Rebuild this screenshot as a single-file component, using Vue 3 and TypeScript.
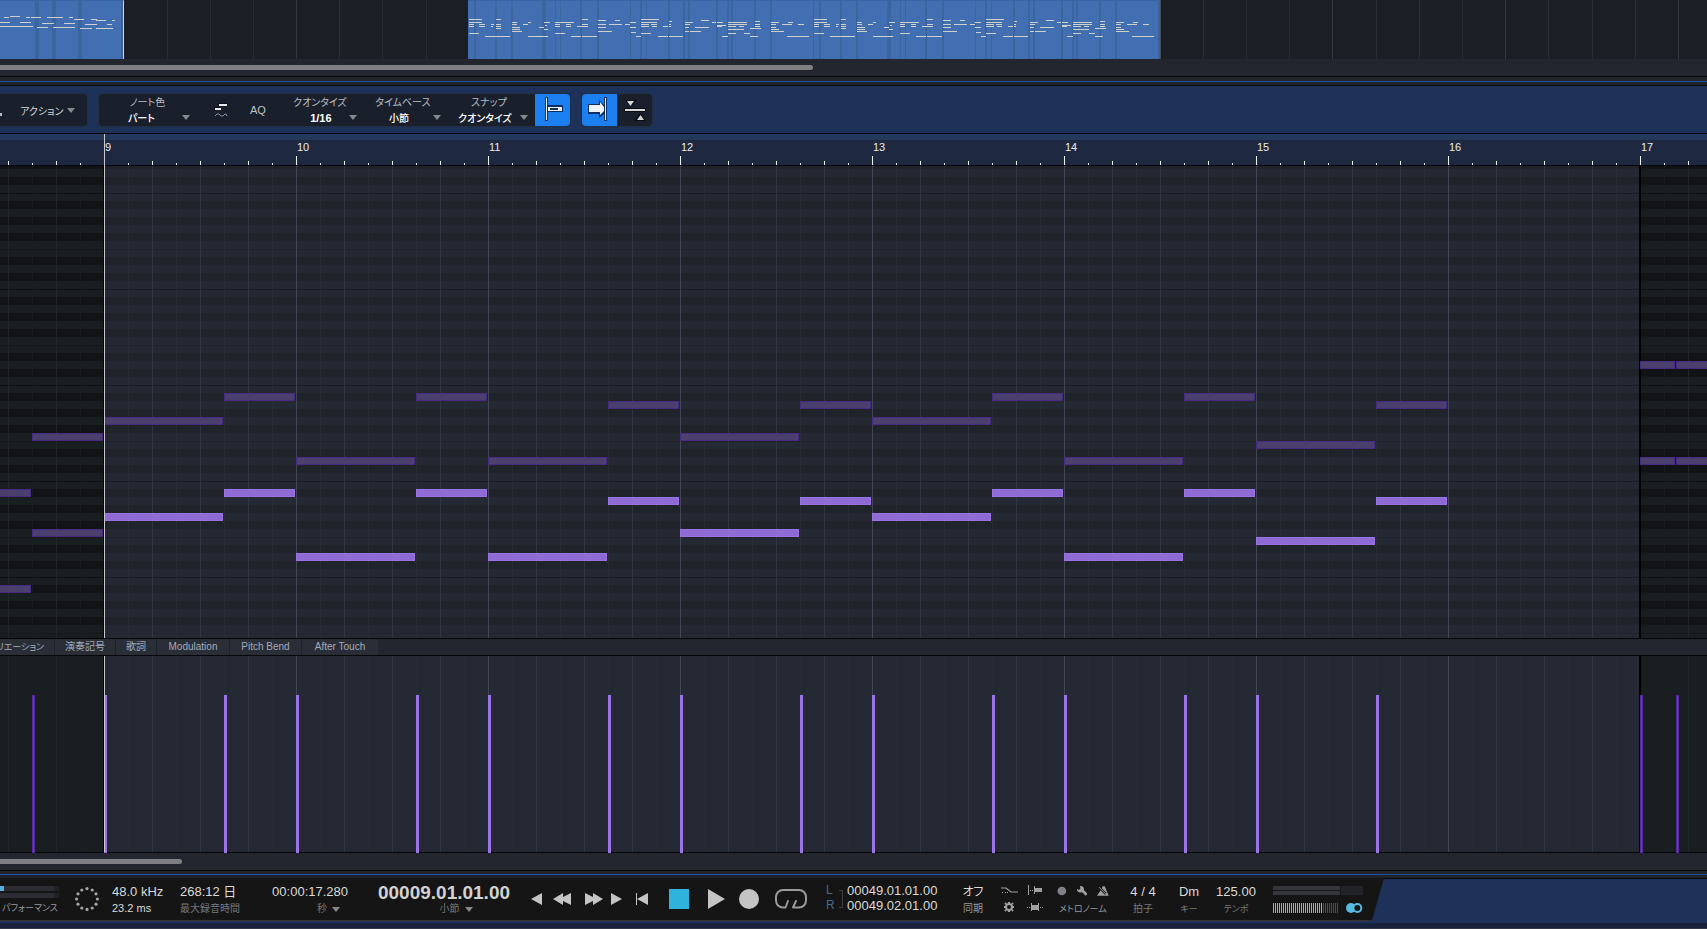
<script setup lang="ts">
import { ref } from 'vue'

interface Span { x: number; w: number; y: number }
interface Note extends Span { dim?: boolean }
interface Hit { x: number; dim?: boolean }

const ORIGIN = 104
const bars = [9, 10, 11, 12, 13, 14, 15, 16, 17]

const lead: Array<[number, number, number]> = [
  [0, 120, 347], [120, 72, 323],
  [192, 120, 387], [312, 72, 323],
  [384, 120, 387], [504, 72, 331],
  [576, 120, 363], [696, 72, 331],
  [768, 120, 347], [888, 72, 323],
  [960, 120, 387], [1080, 72, 323],
  [1152, 120, 371], [1272, 72, 331]
]

const notes: Note[] = [
  ...lead.map(([x, w, y]) => ({ x: ORIGIN + x, w: w - 1, y })),
  ...lead.map(([x, w, y]) => ({ x: ORIGIN + x, w: w - 1, y: y - 96, dim: true })),
  { x: -40, w: 71, y: 323, dim: true },
  { x: -40, w: 71, y: 419, dim: true },
  { x: 32, w: 71, y: 267, dim: true },
  { x: 32, w: 71, y: 363, dim: true },
  { x: 1640, w: 35, y: 195, dim: true },
  { x: 1676, w: 71, y: 195, dim: true },
  { x: 1640, w: 35, y: 291, dim: true },
  { x: 1676, w: 71, y: 291, dim: true }
]

const hits: Hit[] = [
  { x: 32, dim: true },
  ...lead.map(([x]) => ({ x: ORIGIN + x })),
  { x: 1640, dim: true },
  { x: 1676, dim: true }
]

const phrase: Array<[number, number, number]> = [
  [1, 13, 19], [1, 13, 22], [1, 5, 24], [11, 6, 24], [1, 5, 26], [11, 6, 26], [23, 3, 24], [23, 2, 26],
  [28, 5, 19], [28, 5, 24], [28, 5, 26], [28, 5, 28], [1, 10, 33], [17, 25, 36],
  [44, 5, 22], [44, 5, 24], [55, 5, 24], [60, 3, 22], [44, 8, 27], [44, 8, 29], [44, 10, 31], [71, 5, 27],
  [76, 6, 22], [77, 2, 25], [76, 4, 29], [60, 20, 36],
  [87, 19, 22], [87, 5, 24], [98, 5, 24], [87, 5, 26], [98, 5, 26], [87, 10, 33], [103, 10, 36], [114, 6, 19],
  [114, 6, 24], [109, 11, 26], [114, 15, 36],
  [130, 8, 20], [147, 5, 20], [130, 8, 24], [141, 13, 24], [157, 5, 24], [162, 6, 22], [162, 6, 27],
  [163, 5, 32], [130, 8, 27], [130, 14, 31], [168, 5, 36],
  [173, 18, 19], [173, 16, 22], [173, 8, 24], [183, 6, 24], [173, 8, 26], [184, 5, 26], [195, 5, 26],
  [201, 3, 21], [201, 2, 24], [201, 2, 26], [173, 10, 33], [190, 10, 36], [201, 14, 36],
  [217, 8, 22], [217, 5, 24], [233, 8, 20], [217, 4, 27], [227, 14, 27], [217, 4, 31], [222, 11, 31],
  [244, 4, 22], [249, 6, 22], [249, 9, 25], [249, 5, 26], [254, 6, 36],
  [260, 19, 22], [260, 19, 24], [260, 8, 26], [271, 5, 26], [260, 16, 29], [260, 8, 33], [276, 6, 33],
  [287, 5, 21], [287, 5, 24], [287, 5, 26], [282, 11, 28], [282, 8, 36],
  [303, 8, 22], [320, 5, 22], [303, 5, 24], [314, 10, 24], [330, 6, 24], [303, 5, 27], [303, 8, 29],
  [303, 13, 31], [319, 22, 36]
]
const phraseBands: Array<[number, number]> = [
  [6, 2], [27, 2], [43, 2], [74, 4], [87, 1], [92, 1], [112, 2], [129, 2], [162, 1], [172, 2], [178, 1],
  [200, 2], [215, 2], [220, 2], [248, 2], [259, 2], [263, 2], [286, 2], [302, 2], [345, 1]
]
const repeats = [0, 345]
const clipNotes: Span[] = repeats.flatMap(o =>
  phrase.filter(([x]) => x + o < 690).map(([x, w, y]) => ({ x: x + o, w, y })))
const clipBands = repeats.flatMap(o => phraseBands.map(([x, w]) => ({ x: x + o, w })))

const intro: Span[] = ([
  [4, 5, 17], [10, 10, 16], [26, 4, 17], [31, 10, 17], [47, 16, 17], [69, 4, 17], [74, 10, 19], [91, 6, 19],
  [96, 10, 20], [112, 3, 20], [0, 10, 22], [20, 11, 22], [42, 12, 23], [64, 11, 23], [85, 12, 24],
  [107, 5, 24], [0, 33, 26], [37, 11, 27], [53, 22, 27], [80, 12, 28], [96, 17, 28]
] as Array<[number, number, number]>).map(([x, w, y]) => ({ x, w, y }))
const introBands = [{ x: 35, w: 4 }, { x: 52, w: 4 }, { x: 78, w: 4 }]

const arrangeLines = Array.from({ length: 60 }, (_, i) => ({
  x: Math.round(123.4 + i * 43.18),
  strong: i % 4 === 0
}))

const lanes = ['バリエーション', '演奏記号', '歌詞', 'Modulation', 'Pitch Bend', 'After Touch']
const lane = ref(-1)

const ring = Array.from({ length: 12 }, (_, i) => ({
  x: 12 + 10.4 * Math.cos((i * Math.PI) / 6),
  y: 12 + 10.4 * Math.sin((i * Math.PI) / 6)
}))
const px = (n: number) => `${n}px`
</script>

<template>
  <main class="daw">
    <section class="arrange" aria-label="アレンジ">
      <i v-for="l in arrangeLines" :key="l.x" class="aline" :class="{ strong: l.strong }" :style="{ left: px(l.x) }" />
      <div class="clip intro">
        <i v-for="(b, i) in introBands" :key="'b' + i" class="band" :style="{ left: px(b.x), width: px(b.w) }" />
        <i v-for="(n, i) in intro" :key="i" class="mini" :style="{ left: px(n.x), width: px(n.w), top: px(n.y) }" />
      </div>
      <div class="clip body">
        <i v-for="(b, i) in clipBands" :key="'b' + i" class="band" :style="{ left: px(b.x), width: px(b.w) }" />
        <i v-for="(n, i) in clipNotes" :key="i" class="mini" :style="{ left: px(n.x), width: px(n.w), top: px(n.y) }" />
      </div>
    </section>
    <div class="scroll"><div class="thumb wide" /></div>
    <div class="splitter" />

    <header class="toolbar">
      <div class="group first">
        <i class="speck" />
        <button class="action" type="button">アクション<svg class="caret" viewBox="0 0 8 5"><path d="M0 0h8L4 5z" /></svg></button>
      </div>
      <div class="group main">
        <div class="combo color">
          <label for="c1">ノート色</label>
          <select id="c1"><option>パート</option></select>
          <svg class="caret" viewBox="0 0 8 5"><path d="M0 0h8L4 5z" /></svg>
        </div>
        <button class="tool glyph" type="button" aria-label="ヒューマナイズ">
          <svg width="14" height="18" viewBox="0 0 14 18">
            <path d="M4 2h9v3H4zM0 6h7v3H0z" fill="#0b0f16" />
            <path d="M5 3h8v2H5zM1 7h6v2H1z" fill="#e8eaec" />
            <path d="M1 15l2-2h2l2 2h2l2-2h1l1 2" fill="none" stroke="#8d9299" />
          </svg>
        </button>
        <button class="tool aq" type="button">AQ</button>
        <div class="combo quant">
          <label for="c2">クオンタイズ</label>
          <select id="c2"><option>1/16</option></select>
          <svg class="caret" viewBox="0 0 8 5"><path d="M0 0h8L4 5z" /></svg>
        </div>
        <div class="combo base">
          <label for="c3">タイムベース</label>
          <select id="c3"><option>小節</option></select>
          <svg class="caret" viewBox="0 0 8 5"><path d="M0 0h8L4 5z" /></svg>
        </div>
        <div class="combo snap">
          <label for="c4">スナップ</label>
          <select id="c4"><option>クオンタイズ</option></select>
          <svg class="caret" viewBox="0 0 8 5"><path d="M0 0h8L4 5z" /></svg>
        </div>
        <button class="toggle on" type="button" aria-label="スナップ切替" aria-pressed="true">
          <svg width="35" height="32" viewBox="0 0 35 32">
            <path d="M10 3h3v24h-3zM12 11h16v7H12z" fill="#0c2f66" />
            <path d="M11 4h1v22h-1zM13 13h14v4H13z" fill="#f0f2f4" />
            <path d="M15 14h8v2h-8z" fill="#12335f" />
          </svg>
        </button>
      </div>
      <div class="group last">
        <button class="toggle on" type="button" aria-label="自動スクロール" aria-pressed="true">
          <svg width="35" height="32" viewBox="0 0 35 32">
            <path d="M6 10h11V6l5 5V3h3v24h-3v-7l-5 4v-4H6z" fill="#0c2f66" />
            <path d="M7 11h11V8l4 5v4l-4 4v-3H7zM23 4h1v22h-1z" fill="#f0f2f4" />
          </svg>
        </button>
        <button class="toggle" type="button" aria-label="エディターを連動">
          <svg width="35" height="32" viewBox="0 0 35 32">
            <path d="M8 6h12l-6 7zM7 14h22v4H7zM17 27l6-8 6 8z" fill="#0a0e14" />
            <path d="M10 7h7l-3.500 5zM8 15h20v2H8zM20 26h7l-3.500-5z" fill="#d5d6d8" />
          </svg>
        </button>
      </div>
    </header>

    <section class="editor" aria-label="ピアノロール">
      <div class="ruler">
        <span v-for="b in bars" :key="b" class="barno">{{ b }}</span>
      </div>
      <div class="roll">
        <div class="zone before rows" />
        <div class="zone inside rows" />
        <div class="zone after rows" />
        <i v-for="(n, i) in notes" :key="i" class="note" :class="{ dim: n.dim }" :style="{ left: px(n.x), top: px(n.y), width: px(n.w) }" />
      </div>
      <nav class="lanes" role="tablist">
        <button v-for="(t, i) in lanes" :key="t" class="lane" :class="'l' + i" type="button" role="tab" :aria-selected="lane === i" @click="lane = i">{{ t }}</button>
      </nav>
      <div class="velocity">
        <div class="zone before" />
        <div class="zone inside" />
        <div class="zone after" />
        <i v-for="h in hits" :key="h.x" class="hit" :class="{ dim: h.dim }" :style="{ left: px(h.x) }" />
        <i class="playhead" />
      </div>
      <i class="playhead top" />
    </section>
    <div class="scroll"><div class="thumb short" /></div>
    <div class="splitter low" />

    <footer class="dock">
      <div class="transport">
        <div class="perf">
          <div class="meter"><i class="load" /></div>
          <div class="meter" />
          <span class="cap lite kana">パフォーマンス</span>
        </div>
        <svg class="ring" width="24" height="24" viewBox="0 0 24 24">
          <circle v-for="(d, i) in ring" :key="i" :cx="d.x" :cy="d.y" r="1.6" />
        </svg>
        <div class="col rate"><span class="val">48.0 kHz</span><span class="val small">23.2 ms</span></div>
        <div class="col room"><span class="val">268:12 日</span><span class="cap">最大録音時間</span></div>
        <div class="col secs">
          <span class="val">00:00:17.280</span>
          <span class="unit"><select aria-label="時間表示"><option>秒</option></select><svg class="caret" viewBox="0 0 8 5"><path d="M0 0h8L4 5z" /></svg></span>
        </div>
        <div class="col pos">
          <span class="big">00009.01.01.00</span>
          <span class="unit"><select class="two" aria-label="位置表示"><option>小節</option></select><svg class="caret" viewBox="0 0 8 5"><path d="M0 0h8L4 5z" /></svg></span>
        </div>
        <div class="keys">
          <button type="button" aria-label="前へ"><svg width="11" height="12" viewBox="0 0 11 12"><path d="M0 6L11 0v12z" /></svg></button>
          <button type="button" class="k2" aria-label="巻き戻し"><svg width="18" height="12" viewBox="0 0 18 12"><path d="M0 6L10 0v4l8-4v12l-8-4v4z" /></svg></button>
          <button type="button" class="k3" aria-label="早送り"><svg width="18" height="12" viewBox="0 0 18 12"><path d="M18 6L8 0v4L0 0v12l8-4v4z" /></svg></button>
          <button type="button" class="k4" aria-label="次へ"><svg width="11" height="12" viewBox="0 0 11 12"><path d="M11 6L0 0v12z" /></svg></button>
          <button type="button" class="k5" aria-label="先頭へ"><svg width="12" height="12" viewBox="0 0 12 12"><path d="M0 0h1v12H0zM1 6L12 0v12z" /></svg></button>
          <button type="button" class="k6" aria-label="停止"><svg width="20" height="20" viewBox="0 0 20 20"><path d="M0 0h20v20H0z" fill="#2fb2dc" /></svg></button>
          <button type="button" class="k7" aria-label="再生"><svg width="17" height="20" viewBox="0 0 17 20"><path d="M0 0l17 10L0 20z" /></svg></button>
          <button type="button" class="k8" aria-label="録音"><svg width="20" height="20" viewBox="0 0 20 20"><circle cx="10" cy="10" r="10" /></svg></button>
          <button type="button" class="k9" aria-label="ループ">
            <svg width="32" height="20" viewBox="0 0 32 20"><path d="M10.500 18.500H8a7 7 0 0 1-7-7V8a7 7 0 0 1 7-7h16a7 7 0 0 1 7 7v3.500a7 7 0 0 1-7 7h-6l3-6.500M10.500 18.500l2.500-6.500" fill="none" stroke="#9a9a9c" stroke-width="2" stroke-linejoin="round" stroke-linecap="round" /></svg>
          </button>
        </div>
        <div class="lr"><span>L</span><span>R</span></div>
        <i class="bracket" />
        <div class="col loop"><span class="val">00049.01.01.00</span><span class="val">00049.02.01.00</span></div>
        <div class="col sync"><span class="val jp">オフ</span><span class="cap lite">同期</span></div>
        <div class="opts">
          <button type="button" aria-label="プリカウント"><svg width="17" height="12" viewBox="0 0 17 12"><path d="M0 4h5l5 4h7" fill="none" stroke="#a0a0a2" stroke-width="1.200" /><path d="M1 8h1v1H1zM4 8h1v1H4zM6 8h1v1H6z" fill="#a0a0a2" /></svg></button>
          <button type="button" aria-label="オートパンチ"><svg width="17" height="12" viewBox="0 0 17 12"><path d="M1 1h1v10H1zM3 6h1v1H3zM5 6h1v1H5zM7 2h1v8H7zM8 4h7v4H8z" fill="#a0a0a2" /></svg></button>
          <button type="button" aria-label="設定"><svg width="17" height="12" viewBox="0 0 17 12"><circle cx="8" cy="6" r="3" fill="none" stroke="#a0a0a2" stroke-width="2" /><path d="M8 1v2M8 9v2M3 6h2M11 6h2M4 2l1 1M11 9l1 1M12 2l-1 1M5 9l-1 1" stroke="#a0a0a2" stroke-width="2" /></svg></button>
          <button type="button" aria-label="パンチ範囲"><svg width="17" height="12" viewBox="0 0 17 12"><path d="M0 6h1v1H0zM2 6h1v1H2zM4 2h1v8H4zM5 4h6v5H5zM11 2h1v8h-1zM13 6h1v1h-1zM15 6h1v1h-1z" fill="#a0a0a2" /></svg></button>
        </div>
        <div class="metro">
          <div class="icons">
            <svg width="10" height="10" viewBox="0 0 10 10"><circle cx="5" cy="5" r="4.500" fill="#808288" /></svg>
            <svg width="11" height="10" viewBox="0 0 11 10"><path d="M3 0a3.200 3.200 0 0 1 4 4l4 4-2 2-4-4A3.200 3.200 0 0 1 0 3l2 1 1.500-1.500z" fill="#a0a0a2" /></svg>
            <svg width="12" height="10" viewBox="0 0 12 10"><path d="M6 0h2l4 10H0l4-6z" fill="#a0a0a2" /><path d="M2 1l7 7" stroke="#151515" stroke-width="2.500" /><path d="M2 1l7 7" stroke="#a0a0a2" /></svg>
          </div>
          <span class="cap lite kana">メトロノーム</span>
        </div>
        <div class="col beat"><span class="val">4 / 4</span><span class="cap">拍子</span></div>
        <div class="col key"><span class="val">Dm</span><span class="cap kana">キー</span></div>
        <div class="col tempo"><span class="val">125.00</span><span class="cap kana">テンポ</span></div>
        <div class="levels">
          <div class="row"><i class="lv" /><i class="clipbox" /></div>
          <div class="row two">
            <i class="gain" />
            <svg width="17" height="10" viewBox="0 0 17 10"><circle cx="5" cy="5" r="5" fill="#58b9e0" /><circle cx="11.500" cy="5" r="4" fill="#151515" stroke="#58b9e0" stroke-width="2" /></svg>
          </div>
        </div>
      </div>
      <div class="edge" />
    </footer>
  </main>
</template>

<style>
body { margin: 0; background: #18233b; }
</style>

<style scoped>
.daw {
  display: flex; flex-direction: column; height: 100vh; overflow: hidden;
  font-family: "Liberation Sans", "Noto Sans CJK JP", sans-serif;
  font-size: 10px; color: #d6d8da; background: #18233b;
  font-feature-settings: "palt";
}
.daw * { box-sizing: border-box; }
button, select {
  appearance: none; border: 0; margin: 0; padding: 0; background: transparent; color: inherit;
  font: inherit; font-feature-settings: inherit; border-radius: 0;
}
svg { display: block; }
.caret { width: 8px; height: 5px; fill: #85898c; flex: none; }

.arrange { position: relative; height: 59px; flex: none; overflow: hidden; background: #1c1e26; }
.aline { position: absolute; top: 0; bottom: 0; width: 1px; background: #2a2c33; }
.aline.strong { background: #35373f; }
.clip { position: absolute; top: 0; bottom: 0; background: #416fb1; border-top: 1px solid #3a65a2; }
.intro { left: 0; width: 124px; border-right: 1px solid #d3d6da; box-shadow: inset -2px 0 #3a639c; }
.body { left: 468px; width: 693px; border-right: 1px solid #494c55; box-shadow: inset -1px 0 #38609a; }
.band { position: absolute; top: 0; bottom: 0; background: #3a659f; }
.mini { position: absolute; height: 1px; margin-top: -1px; background: #d0d0ca; }

.scroll { height: 17px; flex: none; padding-top: 6px; background: #23262f; }
.thumb { height: 5px; background: #7f7f82; border-radius: 0 3px 3px 0; }
.wide { width: 813px; }
.short { width: 182px; }
.splitter {
  height: 10px; flex: none; border-top: 1px solid #07080a; border-bottom: 1px solid #07080a;
  background: linear-gradient(#22252b 4px, #1e52a5 4px, #1e52a5 5px, #1f2228 5px);
}
.splitter.low { height: 9px; background: linear-gradient(#22252b 3px, #1e52a5 3px, #1e52a5 4px, #1f2228 4px); }

.toolbar { display: flex; height: 47px; flex: none; padding-top: 7px; background: #1e3158; }
.group { display: flex; align-items: center; height: 34px; background: #19202c; border: 1px solid #232f40; border-radius: 5px; overflow: hidden; }
.first { width: 88px; border-left: 0; border-radius: 0 5px 5px 0; margin-right: 10px; }
.speck { width: 2px; height: 3px; margin: 8px 18px 0 0; background: #b8babd; }
.action { display: flex; align-items: center; gap: 4px; }
.main { margin-right: 10px; }
.combo { position: relative; display: flex; flex-direction: column; align-items: center; height: 32px; padding-top: 1px; }
.combo label { line-height: 16px; color: #b9bcc0; white-space: nowrap; }
.combo select { width: 100%; height: 15px; line-height: 15px; text-align: center; text-align-last: center; color: #fff; font-weight: 500; }
.combo .caret { position: absolute; right: 0; bottom: 6px; }
.color { width: 91px; padding-right: 6px; }
.color label { padding-left: 12px; }
.quant { width: 76px; margin-left: 15px; }
.quant label { padding-left: 2px; }
.quant select { padding-left: 4px; font-size: 11px; font-weight: 700; }
.base { width: 70px; margin-left: 14px; padding-right: 14px; }
.base label { padding-left: 8px; }
.snap { width: 72px; margin-left: 15px; padding-right: 14px; margin-right: 7px; }
.snap label { padding-left: 8px; }
.glyph { width: 14px; margin-left: 24px; }
.aq { font-size: 11px; margin-left: 22px; color: #c0c3c6; }
.toggle { width: 35px; height: 32px; background: transparent; }
.toggle.on { background: #1b7ff0; }

.editor { position: relative; display: flex; flex-direction: column; flex: 1 1 0; min-height: 0; }
.ruler {
  display: flex; height: 33px; flex: none; padding: 7px 0 0 104px; overflow: hidden;
  border-top: 1px solid #050608; border-bottom: 1px solid #050608;
  background:
    linear-gradient(90deg, #f2f2f2 1px, transparent 1px) 104px 100% / 192px 9px repeat-x,
    linear-gradient(90deg, #f2f2f2 1px, transparent 1px) 8px 100% / 48px 4px repeat-x,
    linear-gradient(90deg, #f2f2f2 1px, transparent 1px) 8px 100% / 24px 2px repeat-x,
    linear-gradient(#24385c 6px, #1e2840 6px);
}
.barno { flex: none; width: 192px; padding-left: 1px; font-size: 11px; line-height: 12px; color: #ececec; }

.roll { position: relative; display: flex; flex: 1 1 0; min-height: 0; overflow: hidden; border-bottom: 1px solid #050608; }
.zone { --bar: #434757; --beat: #303744; --eighth: #282c33; --row: #252934; --black: #202329; --oct: #191b23; --weak: #20232b; background-color: var(--row); }
.before, .after { --bar: #20252a; --beat: #20262a; --eighth: #1a1e22; --row: #191e21; --black: #121317; --oct: #0e1012; --weak: #14181a; }
.before { width: 104px; flex: none; border-right: 1px solid #050608; }
.inside { width: 1536px; flex: none; box-shadow: inset -1px 0 #000; }
.after { flex: 1; border-left: 1px solid #000; }
.zone {
  background-image:
    linear-gradient(90deg, var(--bar) 1px, transparent 1px),
    linear-gradient(90deg, var(--beat) 1px, transparent 1px),
    linear-gradient(90deg, var(--eighth) 1px, transparent 1px);
  background-size: 192px 100%, 48px 100%, 24px 100%;
}
.before { background-position: -88px 0, 8px 0, 8px 0; }
.after { background-position: -1px 0, -1px 0, -1px 0; }
.rows {
  background-image:
    linear-gradient(90deg, var(--bar) 1px, transparent 1px),
    linear-gradient(90deg, var(--beat) 1px, transparent 1px),
    linear-gradient(90deg, var(--eighth) 1px, transparent 1px),
    linear-gradient(
      var(--oct) 1px, var(--row) 1px, var(--row) 8px, var(--black) 8px, var(--black) 16px,
      var(--row) 16px, var(--row) 24px, var(--black) 24px, var(--black) 32px, var(--row) 32px,
      var(--row) 40px, var(--black) 40px, var(--black) 48px, var(--row) 48px, var(--row) 56px,
      var(--weak) 56px, var(--weak) 57px, var(--row) 57px, var(--row) 64px, var(--black) 64px,
      var(--black) 72px, var(--row) 72px, var(--row) 80px, var(--black) 80px, var(--black) 88px, var(--row) 88px);
  background-size: 192px 100%, 48px 100%, 24px 100%, 100% 96px;
  background-position: 0 0, 0 0, 0 0, 0 27px;
}
.before.rows { background-position: -88px 0, 8px 0, 8px 0, 0 27px; }
.after.rows { background-position: -1px 0, -1px 0, -1px 0, 0 27px; }
.note { position: absolute; height: 8px; background: #8f6bd6; border: 1px solid #9972e4; }
.note.dim { background: #4b3f6d; border-color: #472a82; }

.lanes { display: flex; height: 17px; flex: none; overflow: hidden; background: #23262f; border-bottom: 1px solid #050608; }
.lane { height: 16px; flex: none; background: #2a2e37; border-right: 1px solid #20232b; color: #a3abb9; line-height: 16px; white-space: nowrap; }
.l0 { display: flex; align-items: center; justify-content: flex-end; width: 55px; padding-right: 10px; font-size: 9px; }
.l1 { width: 61px; }
.l2 { width: 41px; }
.l3 { width: 73px; }
.l4 { width: 72px; }
.l5 { width: 76px; border-right: 0; border-radius: 0 4px 0 0; }

.velocity { position: relative; display: flex; height: 197px; flex: none; border-bottom: 1px solid #050608; }
.velocity .zone { --eighth: #272b33; }
.velocity .before, .velocity .after { --eighth: #1b1f23; }
.hit { position: absolute; bottom: -1px; height: 158px; width: 3px; background: #9b74ea; }
.hit.dim { background: #6c3dbf; border: 1px solid #5628a0; }
.playhead { position: absolute; left: 104px; top: 0; bottom: 0; width: 1px; background: #c9c9cb; }
.playhead.top { top: 1px; bottom: 215px; }

.dock { display: flex; flex-direction: column; height: 50px; flex: none; background: linear-gradient(#1e3158 44px, #18233b 44px, #18233b 49px, #353643 49px); }
.transport {
  display: flex; align-items: flex-start; width: 1384px; height: 42px; margin-top: -1px;
  background: #151515; clip-path: polygon(0 0, 100% 0, calc(100% - 12px) 100%, 0 100%);
}
.edge { height: 1px; width: 1371px; background: #3a3330; }
.perf { width: 59px; flex: none; padding-top: 8px; }
.meter { height: 5px; margin-bottom: 2px; background: linear-gradient(90deg, #2b2d33 54px, #202124 54px); }
.load { display: block; width: 4px; height: 5px; background: #5aaede; }
.perf .cap { display: block; margin-left: 2px; }
.cap { font-size: 10px; line-height: 16px; color: #77797c; white-space: nowrap; }
.cap.lite { color: #97999c; }
.cap.kana { font-size: 9px; line-height: 16px; }
.ring { flex: none; margin: 9px 13px 0 16px; fill: #a5a5a5; }
.col { display: flex; flex-direction: column; flex: none; gap: 1px; padding-top: 6px; }
.val { font-size: 13px; line-height: 16px; color: #dadada; white-space: nowrap; }
.val.small { font-size: 11px; line-height: 15px; }
.val.jp { font-size: 12px; }
.rate { width: 68px; }
.room { width: 92px; }
.secs { width: 76px; align-items: flex-end; }
.unit { display: flex; align-items: center; gap: 5px; height: 16px; color: #77797c; }
.unit select { width: 10px; line-height: 16px; }
.unit select.two { width: 20px; }
.secs .unit { margin-right: 8px; }
.pos { width: 134px; margin-left: 29px; align-items: center; padding-top: 4px; gap: 0; }
.big { font-size: 19px; font-weight: 700; line-height: 22px; color: #d2d2d2; }
.pos .unit { margin-top: -3px; margin-left: 24px; }
.keys { display: flex; align-items: center; height: 20px; margin-top: 11px; margin-left: 20px; fill: #c4c4c4; }
.keys button { flex: none; }
.k2 { margin-left: 11px; }
.k3 { margin-left: 14px; }
.k4 { margin-left: 8px; }
.k5 { margin-left: 14px; }
.k6 { margin-left: 21px; }
.k7 { margin-left: 19px; }
.k8 { margin-left: 14px; }
.k9 { margin-left: 16px; }
.lr { display: flex; flex-direction: column; width: 13px; margin-left: 19px; padding-top: 5px; font-size: 12px; line-height: 15px; color: #3c6e88; }
.bracket { width: 4px; height: 18px; margin: 12px 4px 0 0; border: 1px solid #3b3d42; border-left: 0; }
.loop { width: 117px; padding-top: 5px; gap: 0; }
.loop .val { line-height: 15px; }
.sync { width: 18px; align-items: center; }
.opts { display: grid; grid-template-columns: 17px 17px; column-gap: 9px; row-gap: 5px; margin: 6px 0 0 19px; }
.metro { width: 52px; margin-left: 13px; padding-top: 7px; }
.icons { display: flex; gap: 10px; height: 16px; padding-top: 1px; }
.metro .cap { display: block; padding-left: 2px; }
.beat { width: 28px; margin-left: 20px; align-items: center; }
.key { width: 20px; margin-left: 22px; align-items: center; }
.tempo { width: 40px; margin-left: 17px; align-items: center; }
.levels { width: 90px; margin-left: 17px; padding-top: 8px; }
.row { display: flex; gap: 1px; height: 9px; }
.lv { width: 67px; background: linear-gradient(#34363b 4px, #151515 4px, #151515 5px, #34363b 5px); }
.clipbox { width: 22px; background: #212327; }
.row.two { margin-top: 8px; height: 10px; gap: 7px; }
.gain {
  width: 67px; height: 10px;
  background: repeating-linear-gradient(90deg, transparent 0, transparent 1px, #151515 1px, #151515 2px), linear-gradient(90deg, #6fc0e6 50px, #4a4d53 50px);
}
</style>
